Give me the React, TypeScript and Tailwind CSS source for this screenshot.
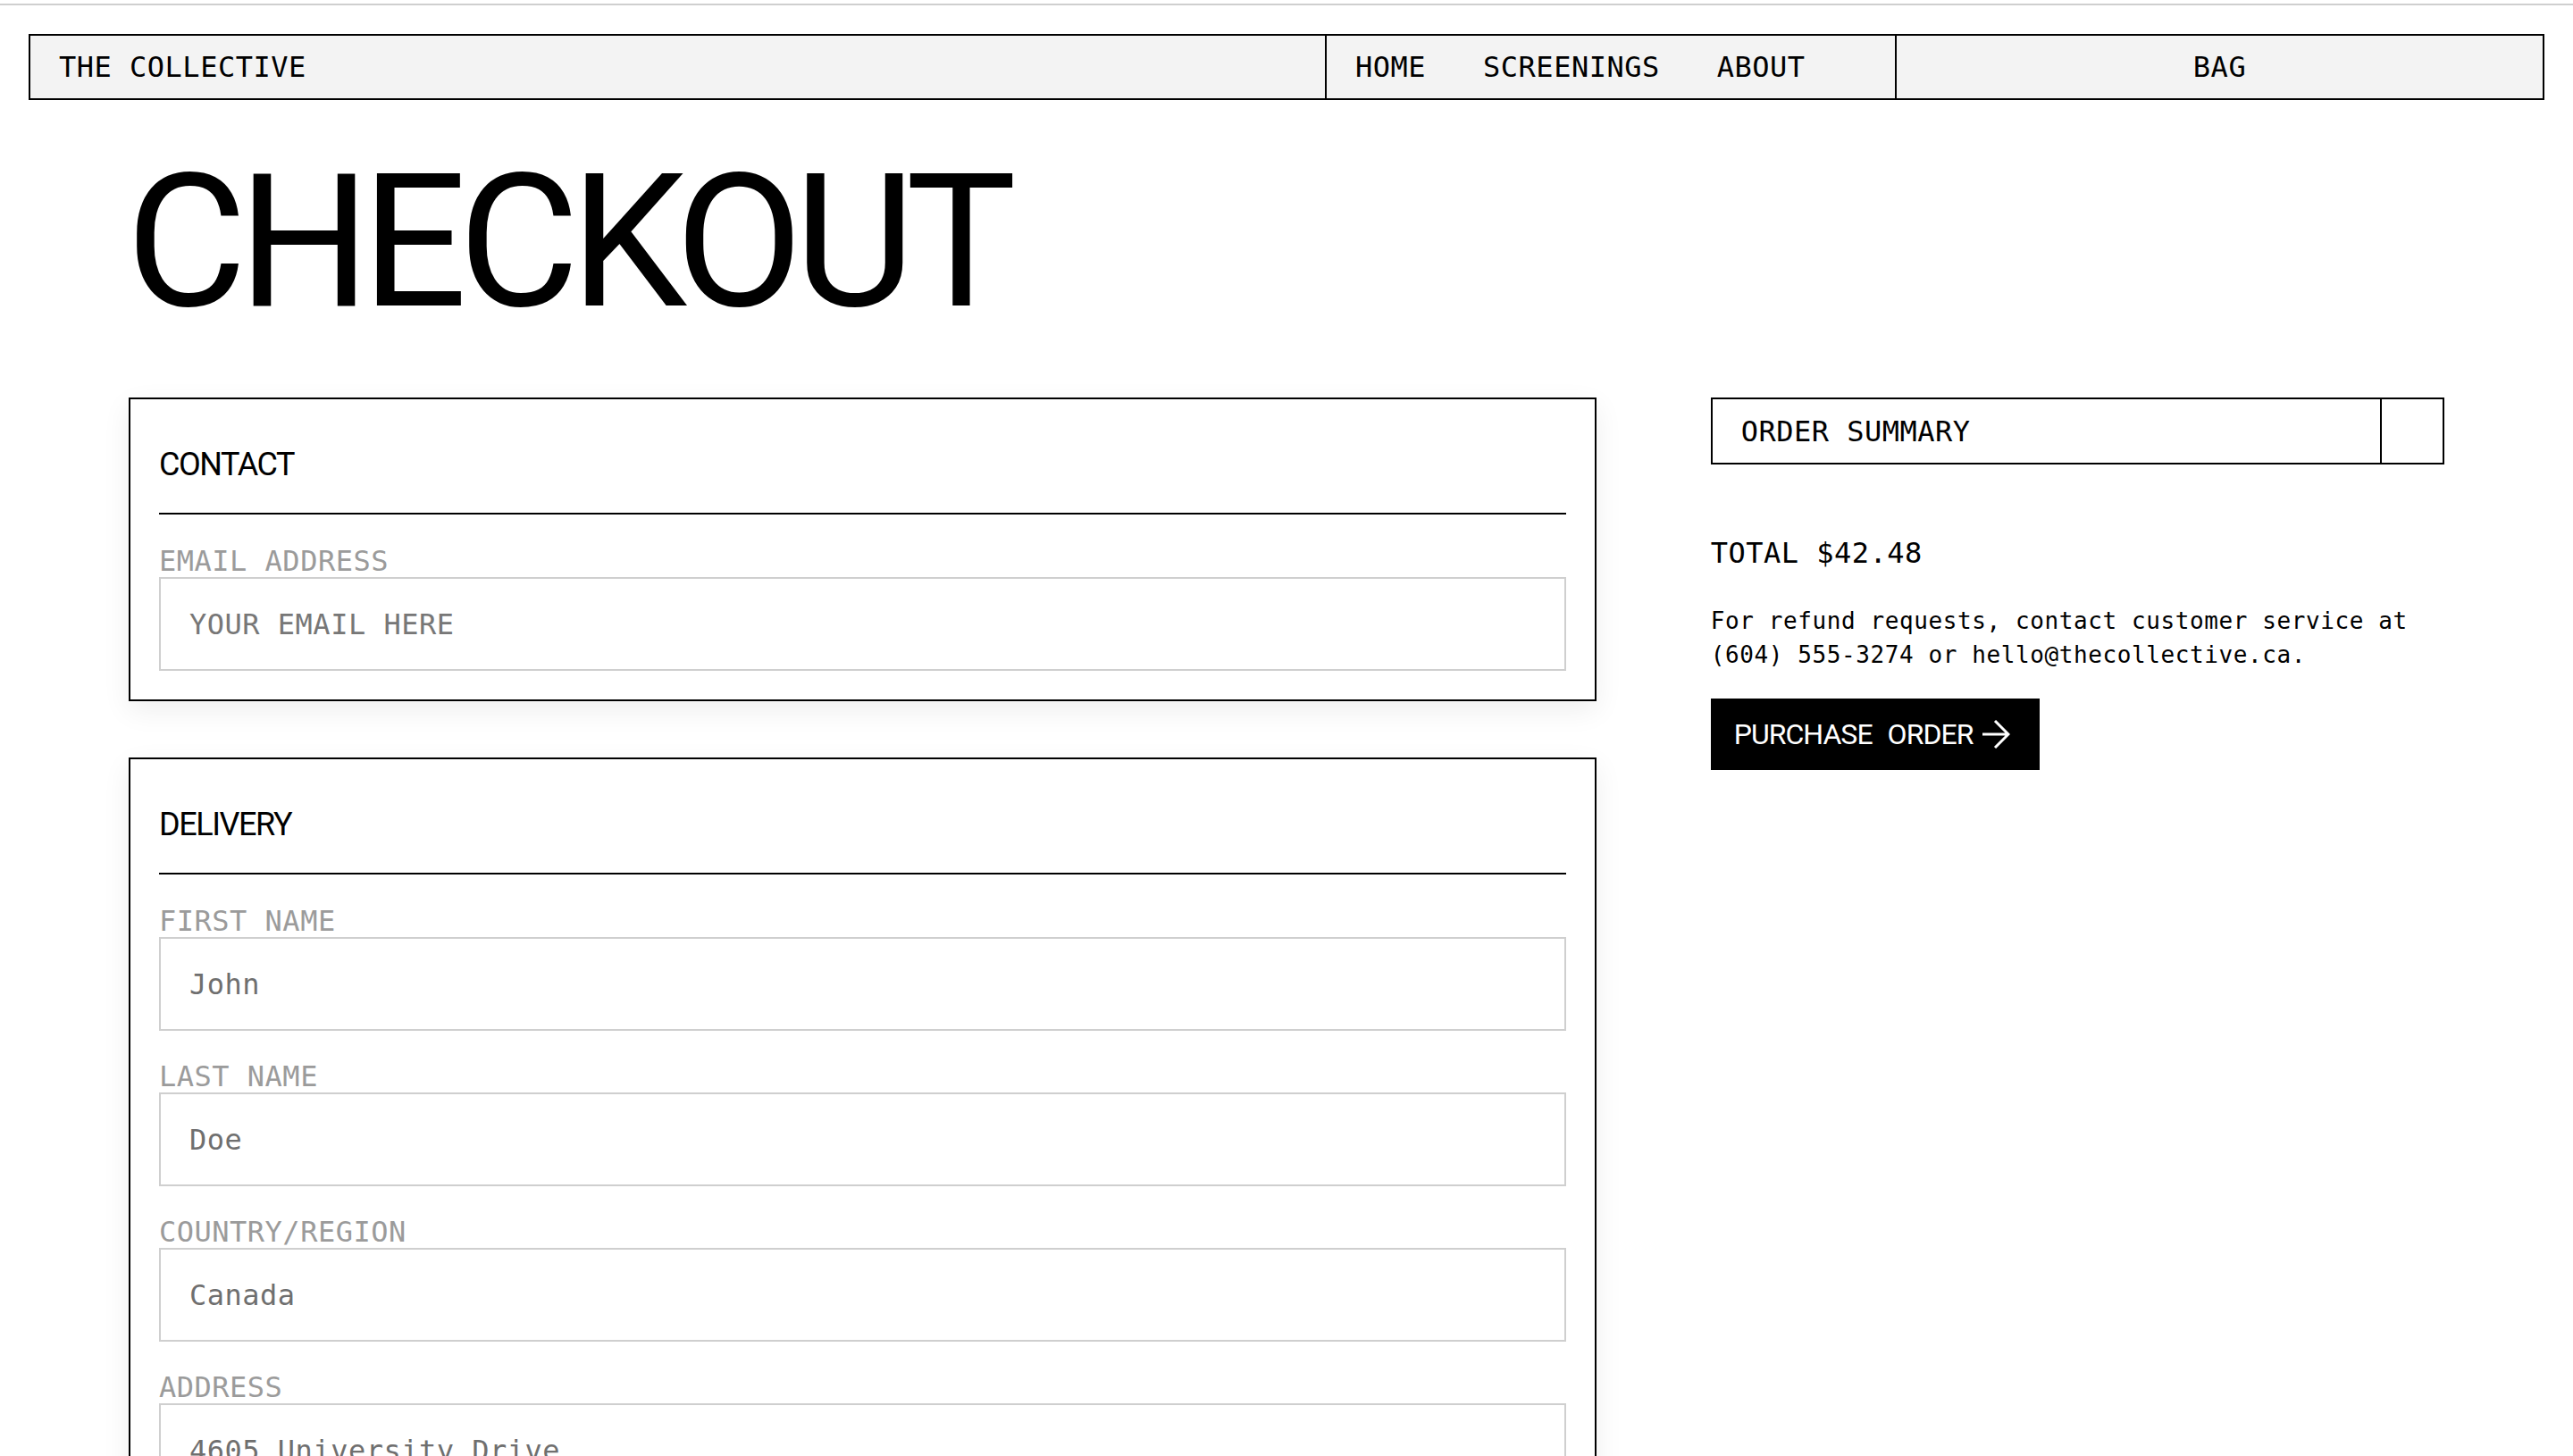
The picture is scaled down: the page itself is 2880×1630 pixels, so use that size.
import React from 'react';

const mono = "font-['DejaVu_Sans_Mono','Liberation_Mono',monospace]";
const sans = "font-['Roboto','Liberation_Sans',sans-serif]";

type FieldProps = {
  label: string;
  value?: string;
  placeholder?: string;
  first?: boolean;
};

const Field: React.FC<FieldProps> = ({ label, value, placeholder, first }) => (
  <label className={`block ${first ? 'mt-[34px]' : 'mt-[33px]'}`}>
    <span className={`block text-[32px] leading-[36px] tracking-[0.5px] text-[#9b9b9b] ${mono}`}>
      {label}
    </span>
    <input
      type="text"
      defaultValue={value}
      placeholder={placeholder}
      className={`block w-full h-[105px] px-8 border-2 border-[#cfcfcf] bg-white text-[32px] tracking-[0.5px] text-[#6f6f6f] placeholder:text-[#777777] outline-none ${mono}`}
    />
  </label>
);

const Section: React.FC<{ title: string; children: React.ReactNode }> = ({ title, children }) => (
  <div className="border-2 border-black bg-white px-8 pt-8 pb-8 shadow-[0_10px_30px_rgba(0,0,0,0.07)]">
    <h2 className={`text-[36px] leading-[36px] tracking-[-0.04em] pt-[23px] pb-[36px] border-b-2 border-black ${sans}`}>
      {title}
    </h2>
    {children}
  </div>
);

const App: React.FC = () => {
  return (
    <div className="min-h-screen bg-white text-black">
      <div className="mt-[4px] h-[2px] bg-[#cfcfcf]" />

      {/* Barre de navigation */}
      <nav className={`mx-8 mt-8 h-[74px] flex border-2 border-black bg-[#f3f3f3] text-[32px] tracking-[0.5px] ${mono}`}>
        <div className="w-[1449px] flex items-center px-8">THE COLLECTIVE</div>
        <div className="w-[638px] flex items-center gap-16 px-8 border-l-2 border-black">
          <a href="#">HOME</a>
          <a href="#">SCREENINGS</a>
          <a href="#">ABOUT</a>
        </div>
        <div className="flex-1 flex items-center justify-center border-l-2 border-black">BAG</div>
      </nav>

      <main className="px-36 pb-24">
        <h1 className={`mt-[55px] -ml-[3px] text-[208px] leading-none tracking-[-0.048em] ${sans}`}>CHECKOUT</h1>

        <div className="mt-[70px] grid grid-cols-[2fr_1fr] gap-32 items-start">
          <div className="flex flex-col gap-[63px]">
            <Section title="CONTACT">
              <Field first label="EMAIL ADDRESS" placeholder="YOUR EMAIL HERE" />
            </Section>

            <Section title="DELIVERY">
              <Field first label="FIRST NAME" value="John" />
              <Field label="LAST NAME" value="Doe" />
              <Field label="COUNTRY/REGION" value="Canada" />
              <Field label="ADDRESS" value="4605 University Drive" />
              <Field label="CITY" value="Vancouver" />
              <Field label="POSTAL CODE" value="V6T 1Z4" />
            </Section>
          </div>

          {/* Résumé de commande */}
          <div className={mono}>
            <div className="h-[75px] flex border-2 border-black">
              <div className="flex-1 flex items-center px-8 text-[32px] tracking-[0.5px]">ORDER SUMMARY</div>
              <button className="w-[70px] border-l-2 border-black" aria-label="Toggle summary" />
            </div>

            <p className="mt-[81px] text-[32px] leading-[36px] tracking-[0.5px]">TOTAL $42.48</p>

            <p className="mt-[39px] text-[26px] leading-[38px] tracking-[0.6px]">
              For refund requests, contact customer service at (604) 555-3274 or hello@thecollective.ca.
            </p>

            <button
              className={`mt-[30px] h-[80px] inline-flex items-center gap-[10px] pl-[26px] pr-[33px] bg-black text-white text-[32px] tracking-[-0.03em] [word-spacing:10px] ${sans}`}
            >
              PURCHASE ORDER
              <svg width="32" height="32" viewBox="0 0 32 32" fill="none" stroke="currentColor" strokeWidth="3">
                <path d="M1 16h29M15 1l15 15-15 15" />
              </svg>
            </button>
          </div>
        </div>
      </main>
    </div>
  );
};

export default App;
